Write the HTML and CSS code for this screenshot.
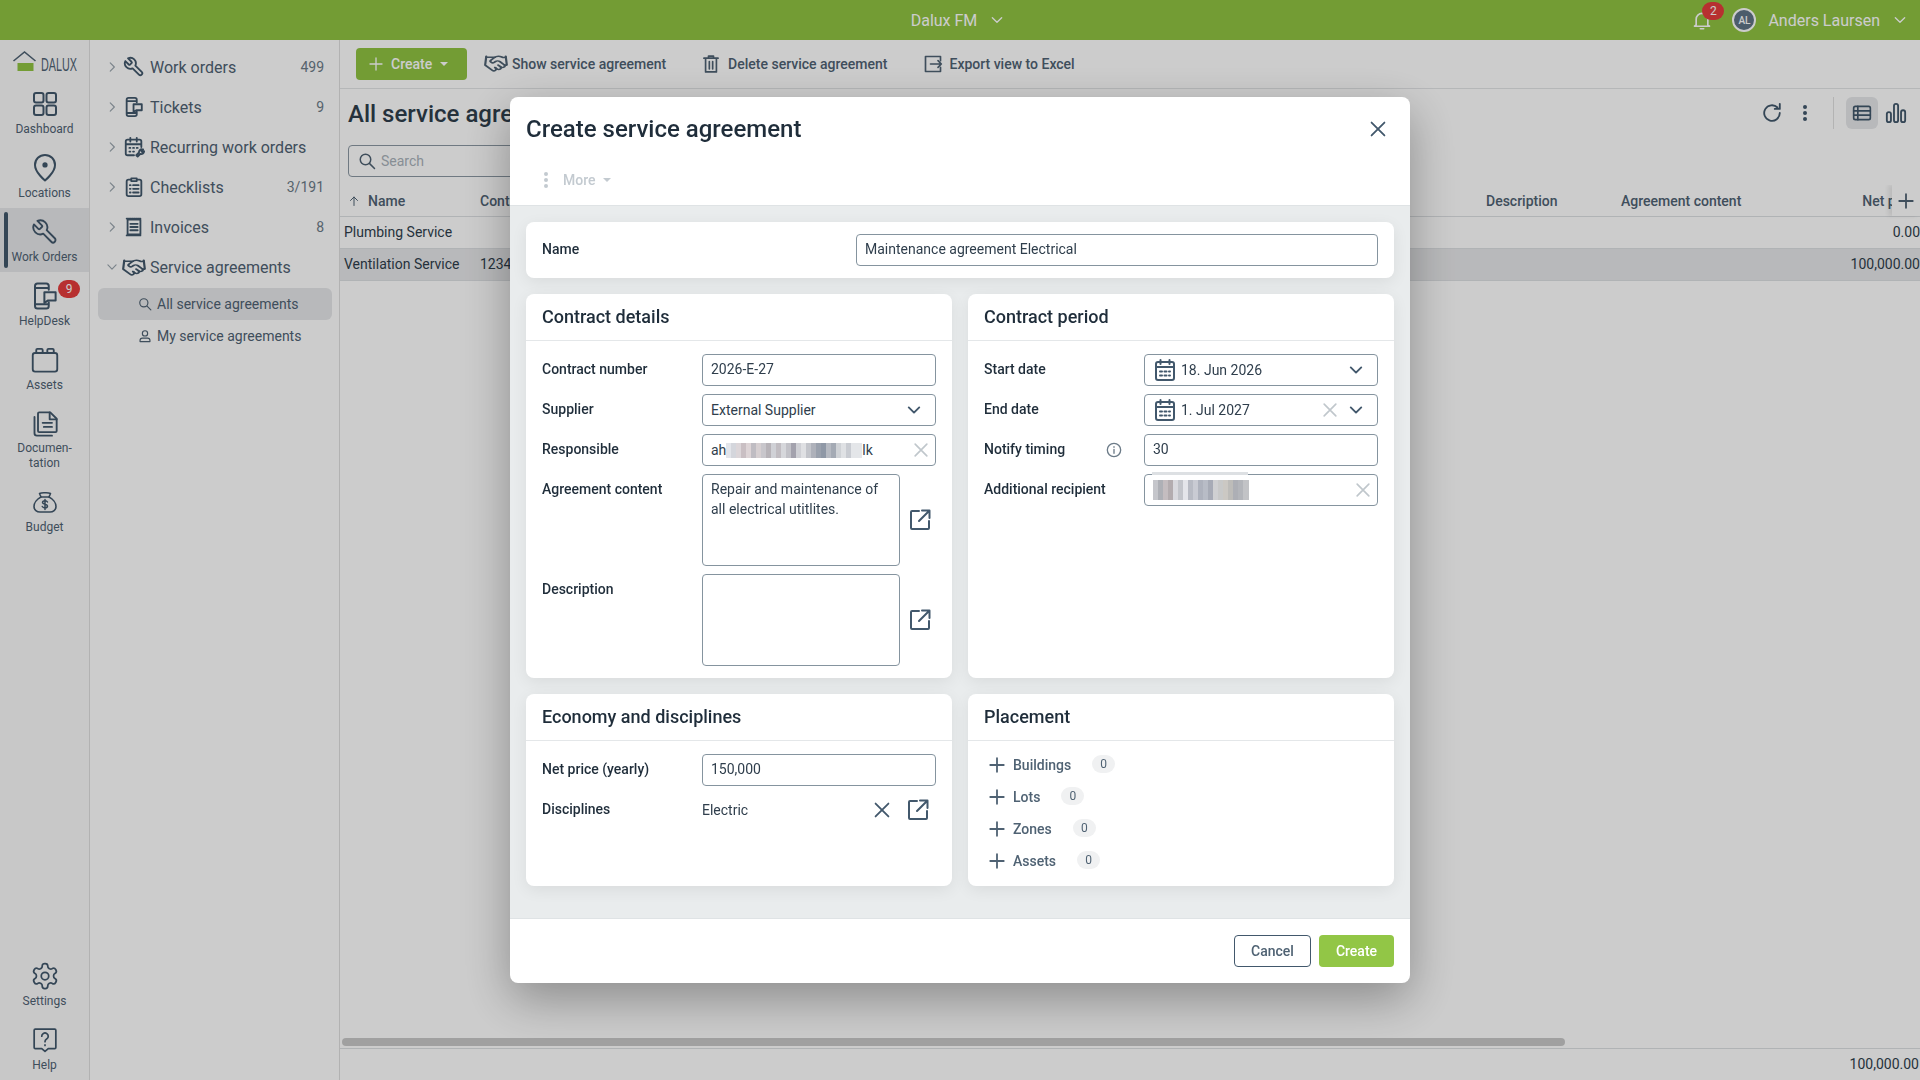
FILE: index.html
```html
<!DOCTYPE html>
<html lang="en">
<head>
    <meta charset="UTF-8">
    <meta name="viewport" content="width=device-width, initial-scale=1.0">
    <title>Dalux FM - Service agreements</title>
    <link rel="stylesheet" href="styles.css">
</head>
<body>
    <!-- icon sprite -->
    <svg class="sprite" xmlns="http://www.w3.org/2000/svg">
        <symbol id="i-chev-right" viewBox="0 0 24 24"><path d="M9 5l7 7-7 7"/></symbol>
        <symbol id="i-chev-down" viewBox="0 0 24 24"><path d="M5 8.500l7 7 7-7"/></symbol>
        <symbol id="i-wrench" viewBox="0 0 24 24"><path transform="translate(24 0) scale(-1 1)" d="M14.7 6.3a1 1 0 0 0 0 1.4l1.6 1.6a1 1 0 0 0 1.4 0l3.77-3.77a6 6 0 0 1-7.94 7.94l-6.91 6.91a2.12 2.12 0 0 1-3-3l6.91-6.91a6 6 0 0 1 7.94-7.94l-3.76 3.76z"/></symbol>
        <symbol id="i-ticket" viewBox="0 0 24 24"><path d="M15 7V4a2 2 0 0 0-2-2H6a2 2 0 0 0-2 2v16a2 2 0 0 0 2 2h7a2 2 0 0 0 2-2v-3M4 5.500h11M4 18.500h11"/><path d="M11.500 9h9v6.500h-6l-3 2z"/></symbol>
        <symbol id="i-recurring" viewBox="0 0 24 24"><path d="M12 21H5a2 2 0 0 1-2-2V6a2 2 0 0 1 2-2h13a2 2 0 0 1 2 2v6M3 9h17M8 2v4M15 2v4M7 13h1M11 13h1M15 13h1M7 17h1M11 17h1"/><path d="M22 14.500l-2 2 1 1 2-1a3 3 0 0 1-4 3L16 22.500l-1.500-1.500 3-3a3 3 0 0 1 3.500-3.500z"/></symbol>
        <symbol id="i-checklist" viewBox="0 0 24 24"><path d="M8 4H6a2 2 0 0 0-2 2v14a2 2 0 0 0 2 2h12a2 2 0 0 0 2-2V6a2 2 0 0 0-2-2h-2"/><path d="M9 2.500h6v3H9zM11 10h6M11 14h6M11 18h6M7.500 10h.8M7.500 14h.8M7.500 18h.8"/></symbol>
        <symbol id="i-invoice" viewBox="0 0 24 24"><path d="M5 4h14v16H5zM8 8.500h8M8 12h8M8 15.500h8"/><path stroke-dasharray="1 1" d="M4 2.800h16M4 21.200h16"/></symbol>
        <symbol id="i-handshake" viewBox="0 0 24 24" preserveAspectRatio="none"><path d="M11 17l2 2a1 1 0 1 0 3-3"/><path d="M14 14l2.500 2.500a1 1 0 1 0 3-3l-3.880-3.880a3 3 0 0 0-4.240 0l-.88.88a1 1 0 1 1-3-3l2.810-2.810a5.790 5.790 0 0 1 7.060-.87l.47.28a2 2 0 0 0 1.420.25L21 4"/><path d="M21 3l1 11h-2"/><path d="M3 3L2 14l6.500 6.500a1 1 0 1 0 3-3"/><path d="M3 4h8"/></symbol>
        <symbol id="i-dashboard" viewBox="0 0 24 24"><rect x="1" y="1" width="9.500" height="9.500" rx="2"/><rect x="13.500" y="1" width="9.500" height="9.500" rx="2"/><rect x="1" y="13.500" width="9.500" height="9.500" rx="2"/><rect x="13.500" y="13.500" width="9.500" height="9.500" rx="2"/></symbol>
        <symbol id="i-pin" viewBox="0 0 24 24"><path d="M12 22s-8-6.500-8-12.500a8 8 0 0 1 16 0C20 15.500 12 22 12 22z"/><circle cx="12" cy="9.500" r="1.300" fill="currentColor"/></symbol>
        <symbol id="i-assets" viewBox="0 0 24 24"><rect x="1.500" y="6" width="21" height="16" rx="2"/><path d="M4.500 6V3.500a1 1 0 0 1 1-1h3.500a1 1 0 0 1 1 1V6M14 6V3.500a1 1 0 0 1 1-1h3.500a1 1 0 0 1 1 1V6"/></symbol>
        <symbol id="i-doc" viewBox="0 0 24 24"><path d="M7 2h9.500L22 7.500V18a1 1 0 0 1-1 1H7a1 1 0 0 1-1-1V3a1 1 0 0 1 1-1z"/><path d="M16 2v6h6" /><path d="M10 11h8M11 14.500h7"/><path d="M3 6v14a2 2 0 0 0 2 2h13"/></symbol>
        <symbol id="i-bag" viewBox="0 0 24 24"><path d="M8 7L6.500 3.500c2-1 3.500-.8 5.500-.8s3.500-.2 5.500.8L16 7"/><path d="M8 7h8c4 2 7 6 7 9.500 0 3.500-3 5.500-6 5.500H7c-3 0-6-2-6-5.500C1 13 4 9 8 7z"/><path stroke-width="1.500" d="M14.500 12c-.5-1-1.500-1.200-2.500-1.200-1.500 0-2.500.7-2.500 1.800 0 2.500 5 1 5 3.500 0 1.200-1 1.800-2.500 1.800-1.200 0-2.200-.4-2.700-1.400M12 9.500v10"/></symbol>
        <symbol id="i-gear" viewBox="0 0 24 24"><path d="M12.220 2h-.44a2 2 0 0 0-2 2v.18a2 2 0 0 1-1 1.730l-.43.25a2 2 0 0 1-2 0l-.15-.08a2 2 0 0 0-2.730.73l-.22.38a2 2 0 0 0 .73 2.730l.15.1a2 2 0 0 1 1 1.720v.51a2 2 0 0 1-1 1.740l-.15.09a2 2 0 0 0-.73 2.730l.22.38a2 2 0 0 0 2.730.73l.15-.08a2 2 0 0 1 2 0l.43.25a2 2 0 0 1 1 1.730V20a2 2 0 0 0 2 2h.44a2 2 0 0 0 2-2v-.18a2 2 0 0 1 1-1.730l.43-.25a2 2 0 0 1 2 0l.15.08a2 2 0 0 0 2.730-.73l.22-.39a2 2 0 0 0-.73-2.730l-.15-.08a2 2 0 0 1-1-1.740v-.5a2 2 0 0 1 1-1.740l.15-.09a2 2 0 0 0 .73-2.730l-.22-.38a2 2 0 0 0-2.730-.73l-.15.08a2 2 0 0 1-2 0l-.43-.25a2 2 0 0 1-1-1.730V4a2 2 0 0 0-2-2z"/><circle cx="12" cy="12" r="3"/></symbol>
        <symbol id="i-help" viewBox="0 0 24 24"><path d="M3 2h18a1 1 0 0 1 1 1v16a1 1 0 0 1-1 1h-6l-3 2.500L9 20H3a1 1 0 0 1-1-1V3a1 1 0 0 1 1-1z"/><path d="M9 8.500a3 3 0 1 1 4.500 2.600c-1 .6-1.500 1.200-1.500 2.400M12 16.500v.5"/></symbol>
        <symbol id="i-plus" viewBox="0 0 24 24"><path d="M12 3v18M3 12h18"/></symbol>
        <symbol id="i-x" viewBox="0 0 24 24"><path d="M5 5l14 14M19 5L5 19"/></symbol>
        <symbol id="i-up" viewBox="0 0 24 24"><path d="M12 21V4M5 11l7-7 7 7"/></symbol>
        <symbol id="i-trash" viewBox="0 0 24 24"><path d="M3.500 5h17M9 5V2.500h6V5M5.500 5v16.500h13V5M10 9v9M14 9v9"/></symbol>
        <symbol id="i-export" viewBox="0 0 24 24"><path d="M21 8V3H3v18h18v-5"/><path d="M9 12h13M18 8l4 4-4 4"/></symbol>
        <symbol id="i-search" viewBox="0 0 24 24"><circle cx="10" cy="10" r="7"/><path d="M15.500 15.500L22 22"/></symbol>
        <symbol id="i-user" viewBox="0 0 24 24"><circle cx="12" cy="7.500" r="4.500"/><path d="M3.500 21.500v-2c0-2.500 2-4 4-4h9c2 0 4 1.500 4 4v2z"/></symbol>
        <symbol id="i-refresh" viewBox="0 0 24 24"><path d="M20.500 12a8.500 8.500 0 1 1-2.500-6"/><path d="M20.500 2v5.500H15"/></symbol>
        <symbol id="i-list" viewBox="0 0 24 24"><rect x="2" y="4" width="20" height="16" rx="2"/><path d="M2 9.500h20M2 14.500h20M7 4v16"/></symbol>
        <symbol id="i-chart" viewBox="0 0 24 24"><rect x="2" y="11" width="4.500" height="11" rx="2.200"/><rect x="9.800" y="2" width="4.500" height="20" rx="2.200"/><rect x="17.500" y="9" width="4.500" height="13" rx="2.200"/></symbol>
        <symbol id="i-bell" viewBox="0 0 24 24"><path d="M5 18V11a7 7 0 0 1 14 0v7l2 1.500H3z"/><path d="M10 22.500h4"/></symbol>
        <symbol id="i-open" viewBox="0 0 24 24"><path d="M11 3H4a1 1 0 0 0-1 1v16a1 1 0 0 0 1 1h16a1 1 0 0 0 1-1v-7"/><path d="M14 2.500h7.500V10M21 3L11 13"/></symbol>
        <symbol id="i-calendar" viewBox="0 0 24 24"><rect x="3" y="4" width="18" height="18" rx="2"/><path d="M3 9h18M7.500 2v4M16.500 2v4"/><path stroke-dasharray="2 2.500" stroke-width="2" d="M7 13.500h10M7 17.500h10"/></symbol>
        <symbol id="i-info" viewBox="0 0 24 24"><circle cx="12" cy="12" r="10"/><path d="M12 11v6M12 7v1"/></symbol>
    </svg>

    <div class="app">
        <header class="topbar">
            <div></div>
            <div class="topbar-title">Dalux FM <svg class="ico ico-16"><use href="#i-chev-down"/></svg></div>
            <div class="topbar-user">
                <span class="bell">
                    <svg class="ico ico-20"><use href="#i-bell"/></svg>
                    <span class="badge badge-bell">2</span>
                </span>
                <span class="avatar">AL</span>
                <span class="user-name">Anders Laursen</span>
                <svg class="ico ico-16"><use href="#i-chev-down"/></svg>
            </div>
        </header>

        <div class="main">
            <nav class="rail">
                <div class="logo">
                    <svg width="66" height="24" viewBox="0 0 66 24" xmlns="http://www.w3.org/2000/svg">
                        <rect x="5.500" y="15" width="16" height="8" fill="#90c442"/>
                        <path d="M1.500 13L12.500 4 23.500 13" fill="none" stroke="#4f6273" stroke-width="1.600"/>
                        <text x="51" y="23" class="logo-text" transform="scale(0.568 1)">DALUX</text>
                    </svg>
                </div>
                <a class="rail-item"><span class="rail-icon"><svg class="ico ico-24 w-2"><use href="#i-dashboard"/></svg></span>Dashboard</a>
                <a class="rail-item"><span class="rail-icon"><svg class="ico ico-30 w-16"><use href="#i-pin"/></svg></span>Locations</a>
                <a class="rail-item active"><span class="rail-icon"><svg class="ico ico-28 w-16"><use href="#i-wrench"/></svg></span>Work Orders</a>
                <a class="rail-item"><span class="rail-icon"><svg class="ico ico-30 w-16"><use href="#i-ticket"/></svg></span>HelpDesk<span class="badge badge-rail">9</span></a>
                <a class="rail-item"><span class="rail-icon"><svg class="ico ico-28 w-16"><use href="#i-assets"/></svg></span>Assets</a>
                <a class="rail-item rail-item-two"><span class="rail-icon"><svg class="ico ico-28 w-16"><use href="#i-doc"/></svg></span>Documen-<br>tation</a>
                <a class="rail-item"><span class="rail-icon"><svg class="ico ico-24 w-16"><use href="#i-bag"/></svg></span>Budget</a>
                <div class="rail-bottom">
                    <a class="rail-item"><span class="rail-icon"><svg class="ico ico-30 w-14"><use href="#i-gear"/></svg></span>Settings</a>
                    <a class="rail-item"><span class="rail-icon"><svg class="ico ico-26 w-16"><use href="#i-help"/></svg></span>Help</a>
                </div>
            </nav>

            <aside class="nav">
                <div class="nav-row"><svg class="ico ico-14 nav-chev"><use href="#i-chev-right"/></svg><svg class="ico ico-22 nav-icon"><use href="#i-wrench"/></svg><span class="nav-label">Work orders</span><span class="nav-count">499</span></div>
                <div class="nav-row"><svg class="ico ico-14 nav-chev"><use href="#i-chev-right"/></svg><svg class="ico ico-22 nav-icon"><use href="#i-ticket"/></svg><span class="nav-label">Tickets</span><span class="nav-count">9</span></div>
                <div class="nav-row"><svg class="ico ico-14 nav-chev"><use href="#i-chev-right"/></svg><svg class="ico ico-22 nav-icon"><use href="#i-recurring"/></svg><span class="nav-label">Recurring work orders</span></div>
                <div class="nav-row"><svg class="ico ico-14 nav-chev"><use href="#i-chev-right"/></svg><svg class="ico ico-22 nav-icon"><use href="#i-checklist"/></svg><span class="nav-label">Checklists</span><span class="nav-count">3/191</span></div>
                <div class="nav-row"><svg class="ico ico-14 nav-chev"><use href="#i-chev-right"/></svg><svg class="ico ico-22 nav-icon"><use href="#i-invoice"/></svg><span class="nav-label">Invoices</span><span class="nav-count">8</span></div>
                <div class="nav-row"><svg class="ico ico-14 nav-chev"><use href="#i-chev-down"/></svg><svg class="ico ico-hand nav-icon-wide"><use href="#i-handshake"/></svg><span class="nav-label">Service agreements</span></div>
                <div class="nav-sub active"><svg class="ico ico-14 w-2"><use href="#i-search"/></svg>All service agreements</div>
                <div class="nav-sub"><svg class="ico ico-14 w-2"><use href="#i-user"/></svg>My service agreements</div>
            </aside>

            <section class="content">
                <div class="toolbar">
                    <button class="btn-create"><svg class="ico ico-16"><use href="#i-plus"/></svg>Create<span class="caret"></span></button>
                    <span class="tool tool-show"><svg class="ico ico-hand"><use href="#i-handshake"/></svg>Show service agreement</span>
                    <span class="tool tool-delete"><svg class="ico ico-20"><use href="#i-trash"/></svg>Delete service agreement</span>
                    <span class="tool tool-export"><svg class="ico ico-20"><use href="#i-export"/></svg>Export view to Excel</span>
                </div>

                <div class="view-head">
                    <h1>All service agreements</h1>
                    <div class="view-actions">
                        <svg class="ico ico-22"><use href="#i-refresh"/></svg>
                        <span class="kebab"></span>
                        <span class="view-sep"></span>
                        <span class="view-btn active"><svg class="ico ico-20"><use href="#i-list"/></svg></span>
                        <span class="view-btn"><svg class="ico ico-22"><use href="#i-chart"/></svg></span>
                    </div>
                </div>

                <div class="search-box"><svg class="ico ico-18"><use href="#i-search"/></svg>Search</div>

                <div class="table">
                    <div class="t-row t-head">
                        <span class="t-name"><svg class="ico ico-12"><use href="#i-up"/></svg>Name</span>
                        <span>Contract number</span>
                        <span>Description</span>
                        <span>Agreement content</span>
                        <span class="t-num">Net price</span>
                        <span class="add-col"><svg class="ico ico-18 w-22"><use href="#i-plus"/></svg></span>
                    </div>
                    <div class="t-row"><span>Plumbing Service</span><span></span><span></span><span></span><span class="t-num">0.00</span></div>
                    <div class="t-row selected"><span>Ventilation Service</span><span>1234</span><span></span><span></span><span class="t-num">100,000.00</span></div>
                </div>

                <div class="scroll-track"><div class="scroll-thumb"></div></div>
                <div class="table-foot">100,000.00</div>
            </section>
        </div>
    </div>

    <div class="overlay">
        <div class="modal">
            <div class="modal-head">
                <div class="modal-title-row">
                    <h2>Create service agreement</h2>
                    <svg class="ico ico-22 modal-close"><use href="#i-x"/></svg>
                </div>
                <div class="modal-more"><span class="kebab kebab-light"></span>More<span class="caret caret-light"></span></div>
            </div>

            <div class="modal-body">
                <div class="card card-wide">
                    <div class="name-row">
                        <label class="field-label">Name</label>
                        <input class="input" type="text" value="Maintenance agreement Electrical">
                    </div>
                </div>

                <div class="card card-tall">
                    <h3 class="card-title">Contract details</h3>
                    <div class="card-body">
                        <div class="field">
                            <label class="field-label">Contract number</label>
                            <input class="input" type="text" value="2026-E-27">
                        </div>
                        <div class="field">
                            <label class="field-label">Supplier</label>
                            <div class="input select"><span class="grow">External Supplier</span><svg class="ico ico-18 w-25"><use href="#i-chev-down"/></svg></div>
                        </div>
                        <div class="field">
                            <label class="field-label">Responsible</label>
                            <div class="input select"><span class="grow redacted-line">ah<span class="mosaic mosaic-a"></span>lk</span><svg class="ico ico-20 clear"><use href="#i-x"/></svg></div>
                        </div>
                        <div class="field">
                            <label class="field-label">Agreement content</label>
                            <div class="area-wrap">
                                <textarea class="input area">Repair and maintenance of all electrical utitlites.</textarea>
                                <svg class="ico ico-24"><use href="#i-open"/></svg>
                            </div>
                        </div>
                        <div class="field">
                            <label class="field-label">Description</label>
                            <div class="area-wrap">
                                <textarea class="input area"></textarea>
                                <svg class="ico ico-24"><use href="#i-open"/></svg>
                            </div>
                        </div>
                    </div>
                </div>

                <div class="card card-tall">
                    <h3 class="card-title">Contract period</h3>
                    <div class="card-body">
                        <div class="field">
                            <label class="field-label">Start date</label>
                            <div class="input select select-date"><svg class="ico ico-24 cal"><use href="#i-calendar"/></svg><span class="grow">18. Jun 2026</span><svg class="ico ico-18 w-25"><use href="#i-chev-down"/></svg></div>
                        </div>
                        <div class="field">
                            <label class="field-label">End date</label>
                            <div class="input select select-date"><svg class="ico ico-24 cal"><use href="#i-calendar"/></svg><span class="grow">1. Jul 2027</span><svg class="ico ico-20 clear-date"><use href="#i-x"/></svg><svg class="ico ico-18 w-25"><use href="#i-chev-down"/></svg></div>
                        </div>
                        <div class="field">
                            <label class="field-label label-info">Notify timing<svg class="ico ico-16 info"><use href="#i-info"/></svg></label>
                            <input class="input" type="text" value="30">
                        </div>
                        <div class="field">
                            <label class="field-label">Additional recipient</label>
                            <div class="input select recipient"><span class="grow"><span class="mosaic mosaic-b"></span></span><span class="mosaic-strip"></span><svg class="ico ico-20 clear"><use href="#i-x"/></svg></div>
                        </div>
                    </div>
                </div>

                <div class="card card-short">
                    <h3 class="card-title">Economy and disciplines</h3>
                    <div class="card-body">
                        <div class="field">
                            <label class="field-label">Net price (yearly)</label>
                            <input class="input" type="text" value="150,000">
                        </div>
                        <div class="field">
                            <label class="field-label">Disciplines</label>
                            <div class="discipline"><span class="grow">Electric</span><svg class="ico ico-22 w-2"><use href="#i-x"/></svg><svg class="ico ico-24"><use href="#i-open"/></svg></div>
                        </div>
                    </div>
                </div>

                <div class="card card-short">
                    <h3 class="card-title">Placement</h3>
                    <div class="card-body placement">
                        <div class="place-row"><svg class="ico ico-18 w-22"><use href="#i-plus"/></svg>Buildings<span class="pill">0</span></div>
                        <div class="place-row"><svg class="ico ico-18 w-22"><use href="#i-plus"/></svg>Lots<span class="pill">0</span></div>
                        <div class="place-row"><svg class="ico ico-18 w-22"><use href="#i-plus"/></svg>Zones<span class="pill">0</span></div>
                        <div class="place-row"><svg class="ico ico-18 w-22"><use href="#i-plus"/></svg>Assets<span class="pill">0</span></div>
                    </div>
                </div>
            </div>

            <div class="modal-foot">
                <button class="btn btn-cancel">Cancel</button>
                <button class="btn btn-primary">Create</button>
            </div>
        </div>
    </div>
</body>
</html>
```

FILE: styles.css
```css
* {
    margin: 0;
    padding: 0;
    box-sizing: border-box;
}

html, body {
    height: 100%;
    overflow: hidden;
}

body {
    font-family: Roboto, 'Liberation Sans', sans-serif;
    font-size: 14px;
    color: #3f5060;
    background-color: #fff;
}

.sprite {
    display: none;
}

.ico {
    display: block;
    flex: none;
    fill: none;
    stroke: currentColor;
    stroke-width: 2;
    stroke-linecap: round;
    stroke-linejoin: round;
}

.ico-12 { width: 12px; height: 12px; }
.ico-14 { width: 14px; height: 14px; }
.ico-16 { width: 16px; height: 16px; }
.ico-18 { width: 18px; height: 18px; }
.ico-20 { width: 20px; height: 20px; }
.ico-22 { width: 22px; height: 22px; }
.ico-24 { width: 24px; height: 24px; }
.ico-26 { width: 26px; height: 26px; }
.ico-28 { width: 28px; height: 28px; }
.ico-30 { width: 30px; height: 30px; }
.ico-hand { width: 26px; height: 19px; }
.w-14 { stroke-width: 1.4; }
.w-16 { stroke-width: 1.6; }
.w-2 { stroke-width: 2; }
.w-22 { stroke-width: 2.4; }
.w-25 { stroke-width: 2.5; }

.app {
    display: flex;
    flex-direction: column;
    height: 100vh;
}

/* top bar */
.topbar {
    display: grid;
    grid-template-columns: 1fr auto 1fr;
    align-items: center;
    height: 40px;
    flex: none;
    background-color: #90c442;
    color: #fff;
    font-size: 16px;
}

.topbar-title {
    display: flex;
    align-items: center;
    gap: 12px;
    margin-left: -4px;
}

.topbar-user {
    display: flex;
    align-items: center;
    justify-content: flex-end;
    padding-right: 12px;
}

.bell {
    position: relative;
    margin-right: 20px;
}

.badge {
    position: absolute;
    display: flex;
    align-items: center;
    justify-content: center;
    width: 22px;
    height: 18px;
    border-radius: 9px;
    background-color: #e53c3c;
    color: #fff;
    font-size: 12px;
}

.badge-bell {
    top: -8px;
    left: 10px;
}

.badge-rail {
    top: 8px;
    left: 58px;
}

.avatar {
    display: flex;
    align-items: center;
    justify-content: center;
    width: 24px;
    height: 24px;
    margin-right: 12px;
    border: 2px solid #fff;
    border-radius: 50%;
    background-color: #5f7386;
    font-size: 10px;
    font-weight: 500;
}

.user-name {
    margin-right: 12px;
}

.main {
    flex: 1;
    display: flex;
    min-height: 0;
}

/* left rail */
.rail {
    width: 90px;
    flex: none;
    display: flex;
    flex-direction: column;
    background-color: #fbfbfb;
    border-right: 1px solid #dfdfdf;
}

.logo {
    height: 40px;
    flex: none;
    display: flex;
    align-items: center;
    justify-content: center;
}

.logo-text {
    font-family: 'Liberation Sans', sans-serif;
    font-size: 19px;
    fill: #4f6273;
}

.rail-item {
    position: relative;
    display: block;
    min-height: 64px;
    padding: 8px 0 7px;
    text-align: center;
    font-size: 12px;
    line-height: 16px;
    color: #4f6273;
}

.rail-item-two {
    line-height: 15px;
}

.rail-item.active {
    background-color: #e7e8ea;
}

.rail-item.active::before {
    content: "";
    position: absolute;
    left: 4px;
    top: 4px;
    bottom: 4px;
    width: 4px;
    border-radius: 2px;
    background-color: #42586c;
}

.rail-icon {
    display: flex;
    align-items: center;
    justify-content: center;
    height: 33px;
    padding-bottom: 1px;
    color: #42586c;
}

.rail-bottom {
    margin-top: auto;
}

/* tree nav */
.nav {
    width: 250px;
    flex: none;
    padding-top: 7px;
    border-right: 1px solid #dfdfdf;
    background-color: #fff;
}

.nav-row {
    display: flex;
    align-items: center;
    height: 40px;
    padding-right: 15px;
    font-size: 16px;
    color: #4f6273;
}

.nav-chev {
    margin-left: 15px;
    color: #9aa5ae;
}

.nav-icon {
    margin-left: 4px;
    margin-right: 5px;
    color: #42586c;
}

.nav-icon-wide {
    margin-left: 2px;
    margin-right: 3px;
    color: #42586c;
}

.nav-label {
    flex: 1;
}

.nav-count {
    font-size: 14px;
    color: #6c7b88;
}

.nav-sub {
    display: flex;
    align-items: center;
    gap: 5px;
    height: 32px;
    margin: 1px 7px -1px 8px;
    padding-left: 40px;
    border-radius: 6px;
    color: #4f6273;
}

.nav-sub.active {
    background-color: #e7e8ea;
}

/* content area */
.content {
    flex: 1;
    min-width: 0;
    display: flex;
    flex-direction: column;
}

.toolbar {
    display: flex;
    align-items: center;
    height: 49px;
    flex: none;
    padding-left: 16px;
    border-bottom: 1px solid #e3e5e7;
    font-weight: 500;
    color: #4f6273;
}

.btn-create {
    display: flex;
    align-items: center;
    width: 111px;
    height: 32px;
    padding-left: 12px;
    gap: 7px;
    border: none;
    border-radius: 4px;
    background-color: #90c442;
    color: #fff;
    font: 500 14px Roboto, sans-serif;
}

.caret {
    width: 0;
    height: 0;
    margin-left: 1px;
    border: 4px solid transparent;
    border-top-color: currentColor;
    border-bottom-width: 0;
}

.tool {
    display: flex;
    align-items: center;
    gap: 6px;
    margin-top: -1px;
}

.tool-show { margin-left: 16px; gap: 3px; }
.tool-delete { margin-left: 35px; gap: 7px; }
.tool-export { margin-left: 36px; gap: 6px; }

.view-head {
    display: flex;
    align-items: center;
    justify-content: space-between;
    height: 48px;
    flex: none;
    padding-left: 8px;
}

h1 {
    font-size: 24px;
    font-weight: 500;
    color: #2f3e4c;
    padding-top: 1px;
}

.view-actions {
    display: flex;
    align-items: center;
    color: #42586c;
    padding-right: 8px;
}

.kebab {
    display: block;
    width: 4px;
    height: 4px;
    margin: 0 26px 0 20px;
    border-radius: 50%;
    background-color: currentColor;
    box-shadow: 0 -6px 0 currentColor, 0 6px 0 currentColor;
}

.view-sep {
    width: 1px;
    height: 32px;
    background-color: #e0e0e0;
    margin-right: 12px;
}

.view-btn {
    display: flex;
    align-items: center;
    justify-content: center;
    width: 32px;
    height: 32px;
    border-radius: 6px;
}

.view-btn.active {
    background-color: #e7e8ea;
}

.view-btn + .view-btn {
    margin-left: 2px;
}

.search-box {
    display: flex;
    align-items: center;
    gap: 5px;
    width: 260px;
    height: 32px;
    flex: none;
    margin: 8px 0 8px 8px;
    padding-left: 9px;
    border: 1px solid #8b98a3;
    border-radius: 4px;
    color: #a9b2ba;
}

.search-box .ico {
    color: #4f6273;
}

.table {
    flex: none;
    overflow: hidden;
}

.t-row {
    position: relative;
    display: grid;
    grid-template-columns: 136px 1006px 135px 1fr auto;
    align-items: center;
    height: 32px;
    padding-left: 4px;
    padding-bottom: 1px;
    border-bottom: 1px solid #dde0e3;
    color: #2f3e4c;
}

.t-head {
    height: 32px;
    padding-bottom: 0;
    font-weight: 500;
    color: #4f6273;
}

.t-head .t-num {
    padding-right: 1px;
}

.t-name {
    display: flex;
    align-items: center;
    gap: 8px;
    padding-left: 4px;
}

.t-num {
    text-align: right;
}

.selected {
    background-color: #e7e8ea;
}

.add-col {
    position: absolute;
    top: 0;
    right: 0;
    bottom: 0;
    display: flex;
    align-items: center;
    justify-content: center;
    width: 28px;
    background-color: #fff;
    box-shadow: -4px 0 4px rgba(0,0,0,0.08);
}

.scroll-track {
    margin-top: auto;
    height: 8px;
    flex: none;
    padding-left: 2px;
}

.scroll-thumb {
    width: 1223px;
    height: 8px;
    border-radius: 4px;
    background-color: #c9c9c9;
}

.table-foot {
    height: 32px;
    flex: none;
    margin-top: 2px;
    padding-right: 1px;
    border-top: 1px solid #dde0e3;
    text-align: right;
    line-height: 31px;
    color: #2f3e4c;
}

/* dialog */
.overlay {
    position: fixed;
    top: 0;
    right: 0;
    bottom: 0;
    left: 0;
    display: flex;
    align-items: center;
    justify-content: center;
    background-color: rgba(0,0,0,0.2);
}

.modal {
    width: 900px;
    border-radius: 8px;
    background-color: #fff;
    overflow: hidden;
    box-shadow: 0 16px 48px rgba(0,0,0,0.32);
}

.modal-head {
    height: 109px;
    border-bottom: 1px solid #dfe3e5;
}

.modal-title-row {
    display: flex;
    align-items: center;
    justify-content: space-between;
    padding: 16px 16px 0;
    height: 48px;
}

h2 {
    font-size: 24px;
    font-weight: 500;
    color: #1f2d3a;
}

.modal-close {
    margin-right: 5px;
    color: #42586c;
}

.modal-more {
    display: flex;
    align-items: center;
    margin-top: 25px;
    height: 20px;
    font-weight: 500;
    color: #c3cad0;
}

.kebab-light {
    margin: 0 15px 0 34px;
}

.caret-light {
    margin-left: 7px;
}

.modal-body {
    display: grid;
    grid-template-columns: 1fr 1fr;
    gap: 16px;
    padding: 16px 16px 32px;
    background-color: #e9eced;
}

.card {
    border-radius: 8px;
    background-color: #fff;
    box-shadow: 0 4px 16px rgba(0,0,0,0.07);
}

.card-wide {
    grid-column: span 2;
    height: 56px;
}

.card-tall {
    height: 384px;
}

.card-short {
    height: 192px;
}

.card-title {
    height: 47px;
    padding: 0 16px;
    border-bottom: 1px solid #e4e7e9;
    font-size: 18px;
    font-weight: 500;
    line-height: 46px;
    color: #1f2d3a;
}

.card-body {
    display: flex;
    flex-direction: column;
    gap: 8px;
    padding: 13px 16px 0;
}

.name-row {
    display: grid;
    grid-template-columns: 314px 1fr;
    padding: 12px 16px;
}

.field {
    display: grid;
    grid-template-columns: 160px 1fr;
}

.field-label {
    padding-top: 5px;
    line-height: 20px;
    font-weight: 500;
    color: #1f2d3a;
}

.label-info {
    display: flex;
    align-items: flex-start;
    justify-content: space-between;
    padding-right: 22px;
}

.label-info .info {
    margin-top: 3px;
    color: #6c7b88;
}

.input {
    display: block;
    width: 100%;
    height: 32px;
    padding: 0 8px 2px;
    border: 1px solid #85949f;
    border-radius: 4px;
    background-color: #fff;
    font: 400 14px Roboto, sans-serif;
    color: #2f3e4c;
    outline: none;
}

.select {
    position: relative;
    display: flex;
    align-items: center;
    padding: 0 12px 0 8px;
    color: #2f3e4c;
}

.select-date {
    padding-bottom: 1px;
}

.grow {
    flex: 1;
    min-width: 0;
}

.cal {
    margin-right: 4px;
    color: #42586c;
}

.clear {
    margin-right: -8px;
    color: #c0c7cc;
}

.clear-date {
    margin-right: 7px;
    color: #c0c7cc;
}

.select > .w-25 {
    color: #42586c;
}

.area-wrap {
    display: flex;
    align-items: center;
    gap: 8px;
    color: #42586c;
}

.area {
    flex: none;
    width: 198px;
    height: 92px;
    padding: 4px 8px;
    line-height: 20px;
    resize: none;
}

.redacted-line {
    display: flex;
    align-items: center;
    height: 20px;
}

.mosaic {
    display: block;
    height: 15px;
}

.mosaic-a {
    width: 136px;
    background: linear-gradient(90deg, #e3e5ea 0 5px, #d4d6dc 5px 10px, #dcd6d9 10px 15px, #c9bfc3 15px 20px, #ddd4d6 20px 25px, #bfbcc2 25px 30px, #d6cfd1 30px 35px, #c8c6cb 35px 40px, #b7b3b8 40px 45px, #d0d1d6 45px 50px, #c1bdc2 50px 55px, #d6d7db 55px 60px, #c2c2c8 60px 65px, #a3a2ad 65px 70px, #cfd0d5 70px 75px, #dfe0e3 75px 80px, #c3c5cb 80px 85px, #aeb1ba 85px 90px, #9aa1ad 90px 95px, #8f98a6 95px 100px, #b6bac2 100px 105px, #a4aab4 105px 110px, #cfd2d6 110px 115px, #dfe1e4 115px 120px, #c9ccd2 120px 125px, #e4e6e9 125px 136px);
}

.mosaic-b {
    width: 96px;
    height: 20px;
    background: linear-gradient(90deg, #c5c6cb 0 5px, #aeb0b6 5px 10px, #c4bdc0 10px 15px, #b3acaf 15px 20px, #d9d9de 20px 25px, #c3c5cb 25px 30px, #e4e5ea 30px 35px, #b8bbc4 35px 40px, #c9cbd3 40px 45px, #aeb2bd 45px 50px, #b8bcc6 50px 55px, #a7abb6 55px 60px, #cfd0d2 60px 65px, #c8c9c9 65px 70px, #cbc8c3 70px 75px, #bdbcb9 75px 80px, #adafb5 80px 85px, #b3b5ba 85px 90px, #c2c3c6 90px 96px);
}

.recipient .mosaic-strip {
    position: absolute;
    top: -3px;
    left: 7px;
    width: 96px;
    height: 3px;
    background-color: #dde0e3;
}

.discipline {
    display: flex;
    align-items: center;
    height: 32px;
    gap: 13px;
    padding-right: 6px;
    color: #2f3e4c;
}

.discipline .ico {
    color: #42586c;
}

.placement {
    gap: 0;
    padding: 8px 16px 0 20px;
}

.place-row {
    display: flex;
    align-items: center;
    height: 32px;
    gap: 7px;
    font-weight: 500;
    color: #4f6273;
}

.pill {
    display: flex;
    align-items: center;
    justify-content: center;
    width: 23px;
    height: 18px;
    margin-left: 14px;
    margin-top: -2px;
    border-radius: 9px;
    background-color: #f0f1f2;
    font-size: 12px;
    font-weight: 400;
}

.modal-foot {
    display: flex;
    justify-content: flex-end;
    gap: 8px;
    height: 65px;
    padding: 16px;
    border-top: 1px solid #dfe3e5;
}

.btn {
    height: 32px;
    border-radius: 4px;
    font: 500 14px Roboto, sans-serif;
}

.btn-cancel {
    width: 77px;
    border: 1px solid #42586c;
    background-color: #fff;
    color: #4f6273;
}

.btn-primary {
    width: 75px;
    border: none;
    background-color: #92c646;
    color: #fff;
}
```
